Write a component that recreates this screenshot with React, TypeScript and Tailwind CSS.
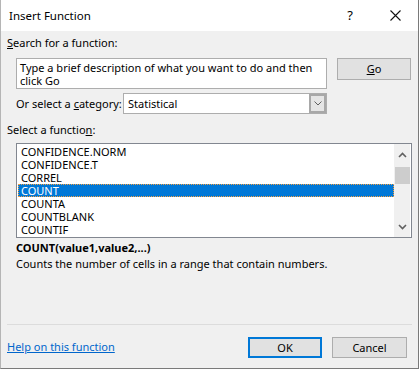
const font = { fontFamily: '"Noto Sans", "Open Sans", sans-serif' }

const items = ['CONFIDENCE.NORM', 'CONFIDENCE.T', 'CORREL', 'COUNT', 'COUNTA', 'COUNTBLANK', 'COUNTIF']

const Chevron = ({ up }: { up?: boolean }) => (
  <svg width="9" height="6" viewBox="0 0 9 6" className="block">
    <path
      d={up ? 'M1 5 L4.5 1.5 L8 5' : 'M1 1 L4.5 4.5 L8 1'}
      fill="none"
      stroke="#606060"
      strokeWidth="1.6"
    />
  </svg>
)

export default function App() {
  return (
    <div
      className="flex h-[369px] w-[419px] flex-col overflow-hidden border-b border-l border-r border-b-[#7a7a7a] border-l-[#b5b5b5] border-r-[#7a7a7a] bg-[#f0f0f0] text-[11px] text-black"
      style={font}
    >
      {/* title bar */}
      <div className="flex h-[31px] shrink-0 items-center bg-white">
        <span className="ml-[8px] text-[11.5px]">Insert Function</span>
        <span className="ml-auto mr-[37px] text-[13px]">?</span>
        <svg width="11" height="11" viewBox="0 0 11 11" className="mr-[17px]">
          <path d="M0.5 0.5 L10.5 10.5 M10.5 0.5 L0.5 10.5" stroke="#111" strokeWidth="1.1" />
        </svg>
      </div>

      <div className="flex flex-1 flex-col px-[6px]">
        <div className="mt-[4px] leading-[16px]">
          <u>S</u>earch for a function:
        </div>

        <div className="mt-[7px] flex items-start pl-[9px]">
          <div className="h-[31px] w-[311px] border border-[#adadad] bg-white pl-[3px] pt-[2px] leading-[13px]">
            Type a brief description of what you want to do and then click Go
          </div>
          <button className="ml-[10px] h-[22px] w-[74px] border border-[#adadad] bg-[#e1e1e1] leading-[16px]">
            <u>G</u>o
          </button>
        </div>

        <div className="mt-[4px] flex items-center pl-[9px]">
          <span className="w-[107px] whitespace-nowrap leading-[16px]">
            Or select a <u>c</u>ategory:
          </span>
          <div className="flex h-[21px] w-[204px] items-stretch border border-[#adadad] bg-white">
            <span className="flex-1 pl-[4px] leading-[19px]">Statistical</span>
            <span className="flex w-[17px] items-center justify-center border-2 border-[#a8a8a8] bg-[#e5e5e5]">
              <svg width="8" height="5" viewBox="0 0 8 5">
                <path d="M0.5 0.5 L4 4 L7.5 0.5" fill="none" stroke="#606060" strokeWidth="1" />
              </svg>
            </span>
          </div>
        </div>

        <div className="mt-[8px] leading-[16px]">
          Select a functio<u>n</u>:
        </div>

        <div className="ml-[9px] mt-[5px] flex h-[95px] w-[396px] border border-[#828790] bg-white">
          <div className="flex-1 overflow-hidden pl-[1px] pt-[1px]">
            {items.map((it) => (
              <div
                key={it}
                className={
                  it === 'COUNT'
                    ? 'h-[13px] bg-[#0078d7] pl-[3px] leading-[13px] text-white outline-1 -outline-offset-1 outline-dotted outline-[#f5a040]'
                    : 'h-[13px] pl-[3px] leading-[13px]'
                }
              >
                {it}
              </div>
            ))}
          </div>
          <div className="mr-[1px] flex w-[16px] flex-col items-center bg-[#f0f0f0]">
            <div className="mt-[8px]">
              <Chevron up />
            </div>
            <div className="mt-[9px] h-[17px] w-[15px] bg-[#cdcdcd]" />
            <div className="mt-auto mb-[7px]">
              <Chevron />
            </div>
          </div>
        </div>

        <div className="mt-[2px] pl-[9px] font-bold leading-[16px]">COUNT(value1,value2,...)</div>
        <div className="pl-[9px] leading-[15px]">Counts the number of cells in a range that contain numbers.</div>

        <div className="mt-auto h-px w-[405px] bg-[#dcdcdc]" />
        <div className="mb-[10px] mt-[12px] flex items-center">
          <a className="text-[#0066cc] underline">Help on this function</a>
          <button className="ml-auto h-[21px] w-[74px] border-2 border-[#0078d7] bg-[#e1e1e1] leading-[16px]">
            OK
          </button>
          <button className="ml-[10px] mr-[5px] h-[21px] w-[75px] border border-[#adadad] bg-[#e1e1e1] leading-[16px]">
            Cancel
          </button>
        </div>
      </div>
    </div>
  )
}
